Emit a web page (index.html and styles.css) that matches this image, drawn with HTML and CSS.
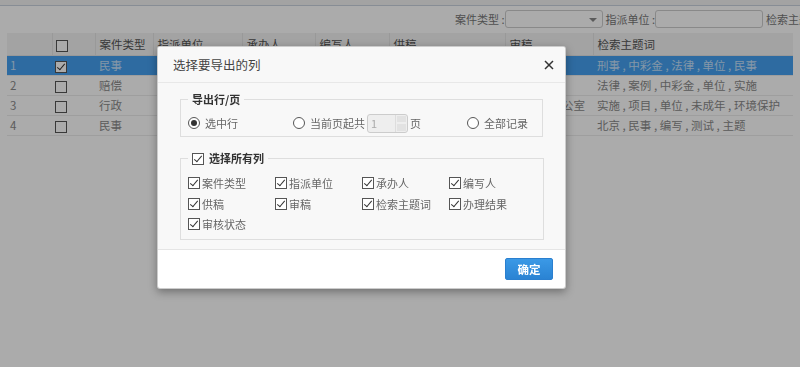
FILE: index.html
```html
<!DOCTYPE html>
<html lang="zh-CN">
<head>
    <meta charset="UTF-8">
    <title>案件列表</title>
    <link rel="stylesheet" href="styles.css">
</head>
<body>
    <div class="page">
        <div class="topbar"></div>

        <div class="toolbar">
            <span class="tb-label">案件类型 :</span>
            <div class="tb-select"><span class="caret"></span></div>
            <span class="tb-label">指派单位 :</span>
            <div class="tb-input"></div>
            <span class="tb-label">检索主题词</span>
        </div>

        <table class="grid">
            <colgroup>
                <col style="width:45px"><col style="width:43px"><col style="width:58px">
                <col style="width:89px"><col style="width:73px"><col style="width:74px">
                <col style="width:116px"><col style="width:88px"><col style="width:200px">
            </colgroup>
            <thead>
                <tr>
                    <th></th>
                    <th><span class="cb"></span></th>
                    <th>案件类型</th>
                    <th>指派单位</th>
                    <th>承办人</th>
                    <th>编写人</th>
                    <th>供稿</th>
                    <th>审稿</th>
                    <th>检索主题词</th>
                </tr>
            </thead>
            <tbody>
                <tr class="selected">
                    <td class="num">1</td><td><span class="cb on"></span></td><td>民事</td>
                    <td></td><td></td><td></td><td></td><td></td>
                    <td>刑事 , 中彩金 , 法律 , 单位 , 民事</td>
                </tr>
                <tr>
                    <td class="num">2</td><td><span class="cb"></span></td><td>赔偿</td>
                    <td></td><td></td><td></td><td></td><td></td>
                    <td>法律 , 案例 , 中彩金 , 单位 , 实施</td>
                </tr>
                <tr>
                    <td class="num">3</td><td><span class="cb"></span></td><td>行政</td>
                    <td></td><td></td><td></td><td></td><td class="clip">办公室</td>
                    <td>实施 , 项目 , 单位 , 未成年 , 环境保护</td>
                </tr>
                <tr>
                    <td class="num">4</td><td><span class="cb"></span></td><td>民事</td>
                    <td></td><td></td><td></td><td></td><td></td>
                    <td>北京 , 民事 , 编写 , 测试 , 主题</td>
                </tr>
            </tbody>
        </table>
    </div>

    <div class="mask"></div>

    <div class="modal">
        <div class="modal-header">
            <span class="modal-title">选择要导出的列</span>
            <svg class="close" width="10" height="10" viewBox="0 0 10 10">
                <path d="M1 1 L9 9 M9 1 L1 9" stroke="#333" stroke-width="1.5" fill="none"/>
            </svg>
        </div>

        <div class="modal-body">
            <fieldset class="group">
                <legend>导出行/页</legend>
                <div class="radio-row">
                    <label class="opt opt-1"><span class="radio on"></span>选中行</label>
                    <label class="opt opt-2">
                        <span class="radio"></span>当前页起共
                        <span class="spin"><span class="spin-val">1</span><span class="spin-btns"><i></i><i></i></span></span>页
                    </label>
                    <label class="opt"><span class="radio"></span>全部记录</label>
                </div>
            </fieldset>

            <fieldset class="group group-cols">
                <legend><span class="cb on"></span>选择所有列</legend>
                <div class="col-grid">
                    <label class="chk"><span class="cb on"></span>案件类型</label>
                    <label class="chk"><span class="cb on"></span>指派单位</label>
                    <label class="chk"><span class="cb on"></span>承办人</label>
                    <label class="chk"><span class="cb on"></span>编写人</label>
                    <label class="chk"><span class="cb on"></span>供稿</label>
                    <label class="chk"><span class="cb on"></span>审稿</label>
                    <label class="chk"><span class="cb on"></span>检索主题词</label>
                    <label class="chk"><span class="cb on"></span>办理结果</label>
                    <label class="chk"><span class="cb on"></span>审核状态</label>
                </div>
            </fieldset>
        </div>

        <div class="modal-footer">
            <button class="btn-ok">确定</button>
        </div>
    </div>
</body>
</html>
```

FILE: styles.css
```css
* {
    box-sizing: border-box;
}
html, body {
    margin: 0;
    height: 100%;
    overflow: hidden;
}
body {
    font-family: "Noto Sans CJK SC", "Noto Sans", sans-serif;
    font-size: 11px;
    color: #333;
    background-color: #fff;
}
.page {
    padding: 0 7px;
}
.topbar {
    height: 6px;
    margin: 0 -7px;
    border-bottom: 1px solid #c9d3de;
    background-color: #f4f4f4;
}
.toolbar {
    display: flex;
    align-items: center;
    height: 18px;
    margin-top: 4px;
    padding-left: 448px;
    white-space: nowrap;
    color: #777;
}
.tb-label {
    flex-shrink: 0;
    margin-right: 0;
}
.tb-select,
.tb-input {
    flex-shrink: 0;
    position: relative;
    height: 18px;
    border: 1px solid #ccc;
    border-radius: 3px;
    background-color: #fff;
    margin-right: 3px;
}
.tb-select {
    width: 98px;
}
.tb-input {
    width: 108px;
}
.caret {
    position: absolute;
    right: 5px;
    top: 7px;
    border-left: 4px solid transparent;
    border-right: 4px solid transparent;
    border-top: 4px solid #888;
}

/* grid */
.grid {
    width: 786px;
    margin-top: 5px;
    border-collapse: collapse;
    table-layout: fixed;
    white-space: nowrap;
    font-size: 11.5px;
}
.grid th {
    height: 22px;
    padding: 0 4px;
    text-align: left;
    font-weight: normal;
    color: #555;
    background-color: #f3f3f3;
    border-left: 1px solid #e4e4e4;
    border-bottom: 1px solid #e4e4e4;
}
.grid th:first-child {
    border-left: none;
}
.grid td {
    height: 20px;
    padding: 0 4px;
    color: #8a8a8a;
    border-bottom: 1px solid #ececec;
    overflow: hidden;
}
.grid td.num {
    padding-left: 3px;
}
.grid td.clip {
    text-align: right;
    padding-right: 8px;
}
.grid tr.selected td {
    background-color: #45a0f0;
    color: #c6e0fa;
}
.grid .cb {
    margin-left: -1px;
}

/* checkbox / radio */
.cb {
    display: inline-block;
    position: relative;
    width: 12px;
    height: 12px;
    border: 1px solid #555;
    background-color: #fff;
    vertical-align: middle;
}
.cb.on::after {
    content: "";
    position: absolute;
    left: 3px;
    top: 0px;
    width: 3px;
    height: 7px;
    border-right: 1.3px solid #333;
    border-bottom: 1.3px solid #333;
    transform: rotate(40deg);
}
.radio {
    display: inline-block;
    position: relative;
    width: 12px;
    height: 12px;
    border: 1px solid #555;
    border-radius: 50%;
    background-color: #fff;
    vertical-align: middle;
    margin-right: 5px;
}
.radio.on::after {
    content: "";
    position: absolute;
    left: 2px;
    top: 2px;
    width: 6px;
    height: 6px;
    border-radius: 50%;
    background-color: #333;
}

.mask {
    position: fixed;
    inset: 0;
    background-color: rgba(0, 0, 0, 0.33);
}

/* modal */
.modal {
    position: absolute;
    left: 157px;
    top: 46px;
    width: 409px;
    background-color: #fff;
    border: 1px solid rgba(0, 0, 0, 0.2);
    border-radius: 3px;
    box-shadow: 0 3px 9px rgba(0, 0, 0, 0.35);
    overflow: hidden;
}
.modal-header {
    display: flex;
    align-items: center;
    justify-content: space-between;
    height: 36px;
    padding: 0 11px 0 15px;
    background-color: #f8f8f8;
    border-bottom: 1px solid #e8e8e8;
}
.modal-title {
    font-size: 12.5px;
    color: #444;
}
.close {
    display: block;
}
.modal-body {
    padding: 8px 22px 9px;
    background-color: #f8f8f8;
    border-bottom: 1px solid #e5e5e5;
}
.group {
    margin: 0;
    padding: 6px 7px 3px;
    border: 1px solid #dedede;
}
.group legend {
    padding: 0 4px;
    font-weight: bold;
    color: #333;
    line-height: 16px;
}
.group-cols {
    margin-top: 13px;
    padding-top: 7px;
    padding-bottom: 4px;
}
.group-cols legend .cb {
    margin-right: 5px;
    margin-top: -2px;
}
.radio-row {
    display: flex;
    align-items: center;
    height: 20px;
    color: #666;
}
.opt {
    display: flex;
    align-items: center;
    white-space: nowrap;
}
.opt-1 {
    width: 105px;
}
.opt-2 {
    width: 174px;
}
.spin {
    display: inline-flex;
    width: 41px;
    height: 19px;
    margin: 0 2px 0 2px;
    border: 1px solid #ccc;
    border-radius: 3px;
    background-color: #eee;
}
.spin-val {
    flex: 1;
    padding-left: 3px;
    line-height: 17px;
    color: #aaa;
}
.spin-btns {
    display: flex;
    flex-direction: column;
    width: 12px;
    border-left: 1px solid #ddd;
}
.spin-btns i {
    flex: 1;
    margin: 1px;
    background-color: #e2e2e2;
}
.col-grid {
    display: grid;
    grid-template-columns: repeat(4, 87px);
    grid-auto-rows: 20.5px;
    align-items: center;
}
.chk {
    display: flex;
    align-items: center;
    color: #666;
    white-space: nowrap;
}
.chk .cb {
    margin-right: 2px;
}
.modal-footer {
    display: flex;
    justify-content: flex-end;
    padding: 8px 12px;
}
.btn-ok {
    width: 48px;
    height: 22px;
    padding: 0;
    border: 1px solid #2a7fcf;
    border-radius: 2px;
    background: linear-gradient(#3b99e6, #2a83d3);
    color: #fff;
    font-family: inherit;
    font-size: 11.5px;
    font-weight: bold;
}
```
